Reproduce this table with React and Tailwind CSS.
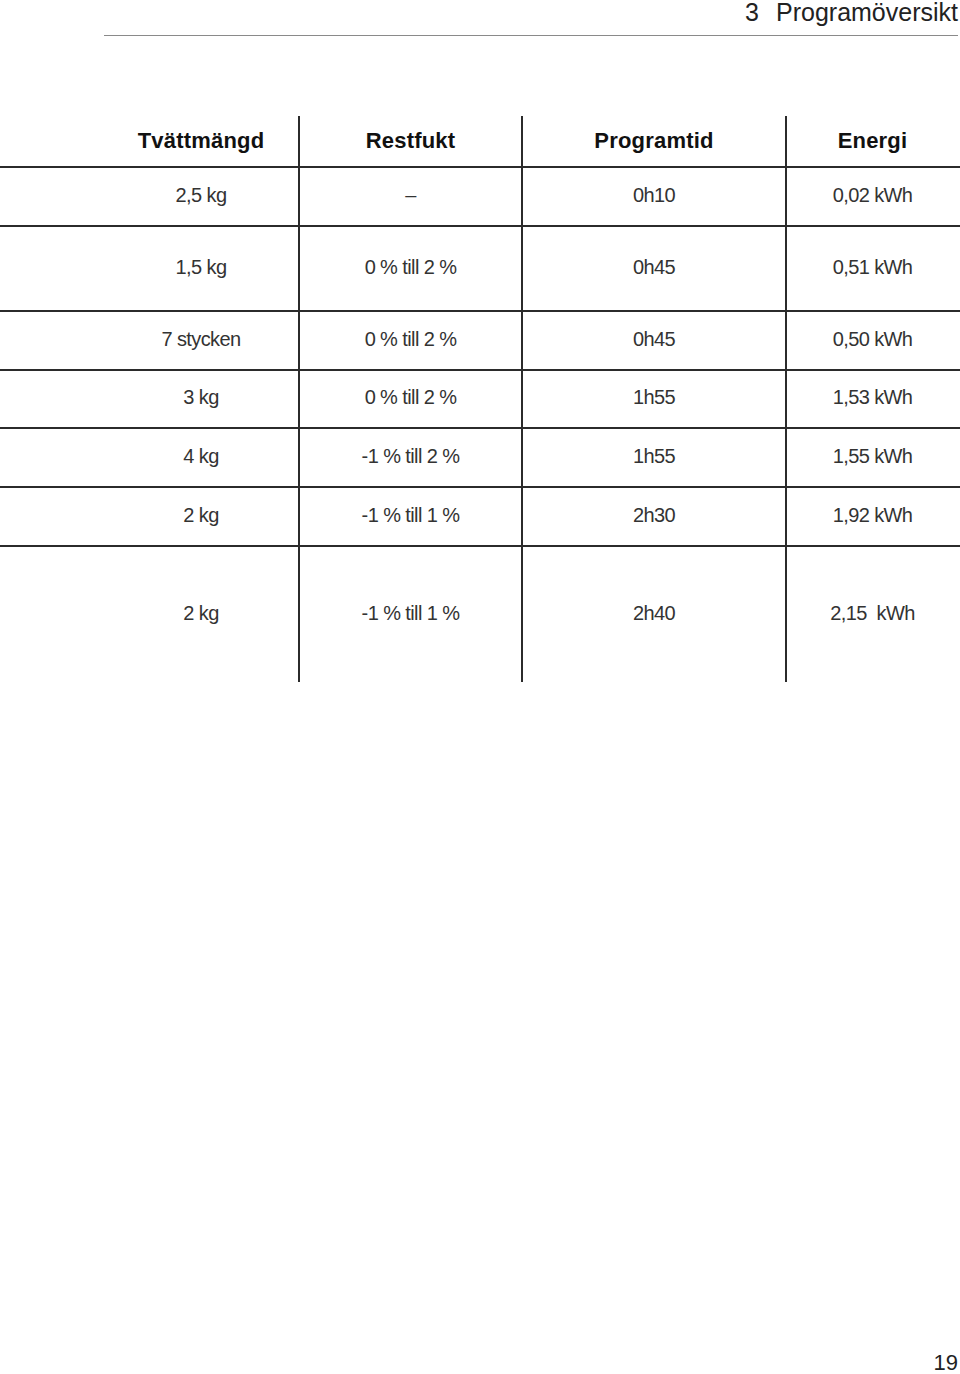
const rows = [
  { h: "h-[59px]", cells: ["2,5 kg", "–", "0h10", "0,02 kWh"] },
  { h: "h-[85px]", cells: ["1,5 kg", "0 % till 2 %", "0h45", "0,51 kWh"] },
  { h: "h-[59px]", cells: ["7 stycken", "0 % till 2 %", "0h45", "0,50 kWh"] },
  { h: "h-[58px]", cells: ["3 kg", "0 % till 2 %", "1h55", "1,53 kWh"] },
  { h: "h-[59px]", cells: ["4 kg", "-1 % till 2 %", "1h55", "1,55 kWh"] },
  { h: "h-[59px]", cells: ["2 kg", "-1 % till 1 %", "2h30", "1,92 kWh"] },
  { h: "h-[135px]", cells: ["2 kg", "-1 % till 1 %", "2h40", "2,15  kWh"], last: true },
]

const cols = "grid grid-cols-[298px_223px_264px_175px]"

function Row({ cells, h, last, head }) {
  return (
    <div className={`${cols} ${h} ${last ? "" : "border-b-2 border-[#2b2b2b]"}`}>
      {cells.map((c, i) => (
        <div
          key={i}
          className={`flex items-center justify-center whitespace-pre ${i === 0 ? "pl-[104px]" : "border-l-2 border-[#2b2b2b]"} ${
            i === 3 ? "pr-[2px]" : ""
          } ${head ? "pb-[2px] text-[22px] font-bold text-[#111] tracking-[0.2px]" : "pb-[4px] text-[20px] text-[#333] tracking-[-0.6px]"}`}
        >
          {c}
        </div>
      ))}
    </div>
  )
}

export default function App() {
  return (
    <div className="relative flex min-h-[1374px] w-[960px] flex-col bg-white" style={{ fontFamily: '"Liberation Sans", Arial, sans-serif' }}>
      {/* sidhuvud */}
      <div className="flex h-[35px] items-start justify-end pr-[2px] text-[25px] leading-[24px] text-[#222]">
        <span>3</span>
        <span className="ml-[17px]">Programöversikt</span>
      </div>
      <div className="ml-[104px] mr-[2px] h-px bg-[#8a8a8a]" />

      <div className="mt-[80px]">
        <Row head h="h-[52px]" cells={["Tvättmängd", "Restfukt", "Programtid", "Energi"]} />
        {rows.map((r, i) => (
          <Row key={i} {...r} />
        ))}
      </div>

      <div className="mt-auto flex justify-end pr-[2px] text-[22px] leading-[22px] text-[#222]">19</div>
    </div>
  )
}
